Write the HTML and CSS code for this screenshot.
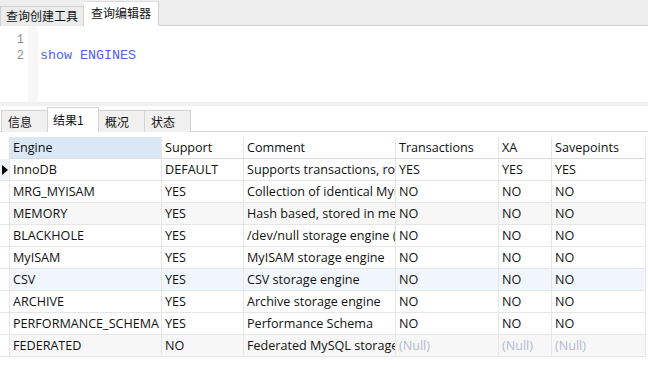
FILE: index.html
```html
<!DOCTYPE html>
<html>
<head>
<meta charset="utf-8">
<link rel="stylesheet" href="styles.css">
</head>
<body>
<div class="topbar">
  <div class="ttab">查询创建工具</div>
  <div class="ttab active">查询编辑器</div>
</div>
<div class="editor">
  <div class="gutter">
    <div class="ln">1</div>
    <div class="ln">2</div>
  </div>
  <div class="code">
    <div class="cl"></div>
    <div class="cl kw">show ENGINES</div>
  </div>
</div>
<div class="band"></div>
<div class="rtabs">
  <div class="rtab">信息</div>
  <div class="rtab active">结果1</div>
  <div class="rtab">概况</div>
  <div class="rtab">状态</div>
</div>
<div class="grid">
  <div class="row head">
    <div class="ind"></div>
    <div class="c sel">Engine</div>
    <div class="c">Support</div>
    <div class="c">Comment</div>
    <div class="c">Transactions</div>
    <div class="c">XA</div>
    <div class="c">Savepoints</div>
  </div>
  <div class="row">
    <div class="ind cur"><span class="tri"></span></div>
    <div class="c">InnoDB</div><div class="c">DEFAULT</div><div class="c"><span class="t">Supports transactions, row-level locking, and foreign keys</span></div><div class="c">YES</div><div class="c">YES</div><div class="c">YES</div>
  </div>
  <div class="row">
    <div class="ind"></div>
    <div class="c">MRG_MYISAM</div><div class="c">YES</div><div class="c"><span class="t">Collection of identical MyISAM tables</span></div><div class="c">NO</div><div class="c">NO</div><div class="c">NO</div>
  </div>
  <div class="row alt">
    <div class="ind"></div>
    <div class="c">MEMORY</div><div class="c">YES</div><div class="c"><span class="t">Hash based, stored in memory, useful for temporary tables</span></div><div class="c">NO</div><div class="c">NO</div><div class="c">NO</div>
  </div>
  <div class="row">
    <div class="ind"></div>
    <div class="c">BLACKHOLE</div><div class="c">YES</div><div class="c"><span class="t">/dev/null storage engine (anything you write to it disappears)</span></div><div class="c">NO</div><div class="c">NO</div><div class="c">NO</div>
  </div>
  <div class="row">
    <div class="ind"></div>
    <div class="c">MyISAM</div><div class="c">YES</div><div class="c">MyISAM storage engine</div><div class="c">NO</div><div class="c">NO</div><div class="c">NO</div>
  </div>
  <div class="row hov">
    <div class="ind"></div>
    <div class="c">CSV</div><div class="c">YES</div><div class="c">CSV storage engine</div><div class="c">NO</div><div class="c">NO</div><div class="c">NO</div>
  </div>
  <div class="row">
    <div class="ind"></div>
    <div class="c">ARCHIVE</div><div class="c">YES</div><div class="c">Archive storage engine</div><div class="c">NO</div><div class="c">NO</div><div class="c">NO</div>
  </div>
  <div class="row">
    <div class="ind"></div>
    <div class="c">PERFORMANCE_SCHEMA</div><div class="c">YES</div><div class="c">Performance Schema</div><div class="c">NO</div><div class="c">NO</div><div class="c">NO</div>
  </div>
  <div class="row alt">
    <div class="ind"></div>
    <div class="c">FEDERATED</div><div class="c">NO</div><div class="c"><span class="t">Federated MySQL storage engine</span></div><div class="c null">(Null)</div><div class="c null">(Null)</div><div class="c null">(Null)</div>
  </div>
</div>
</body>
</html>
```
FILE: styles.css
```css
* { box-sizing: border-box; }
html, body {
  margin: 0;
  padding: 0;
  background: #ffffff;
  width: 648px;
  height: 392px;
  overflow: hidden;
  font-family: "Open Sans", "Noto Sans CJK SC", sans-serif;
  font-size: 12.6px;
  color: #111;
}

.topbar {
  height: 26px;
  background: #eeeeee;
  border-bottom: 1px solid #d2d2d2;
  display: flex;
  align-items: flex-end;
}
.ttab {
  font-family: "Noto Sans CJK SC", sans-serif;
  font-size: 12px;
  height: 20px;
  line-height: 18px;
  padding: 0;
  width: 84px;
  background: #ececec;
  border: 1px solid #d2d2d2;
  border-bottom: none;
  margin-bottom: -1px;
  text-align: center;
  white-space: nowrap;
  color: #111;
}
.ttab.active {
  width: 75px;
  height: 25px;
  line-height: 21px;
  background: #ffffff;
  border-left: none;
  border-top: 1px solid #dedede;
  border-right: 1px solid #d2d2d2;
}

.editor {
  height: 76px;
  display: flex;
  padding-top: 6px;
}
.gutter {
  width: 38px;
  margin-top: -6px;
  padding-top: 6px;
  background:
    repeating-conic-gradient(#f2f2f2 0 25%, #ffffff 0 50%) 28px 0 / 2px 2px;
  background-clip: content-box;
}
.gutter {
  background: linear-gradient(to right, #ffffff 0 28px, #f7f7f7 28px 38px);
}
.ln {
  height: 16px;
  line-height: 16px;
  width: 24px;
  text-align: right;
  font-family: "Liberation Mono", monospace;
  font-size: 12px;
  color: #909090;
}
.code {
  padding-left: 2px;
}
.cl {
  height: 16px;
  line-height: 16px;
  font-family: "Liberation Mono", monospace;
  font-size: 13.33px;
}
.kw { color: #4c63f2; }

.band {
  height: 4px;
  background: #f0f0f0;
}

.rtabs {
  height: 26px;
  display: flex;
  align-items: flex-end;
  padding-left: 1px;
  border-bottom: 1px solid #d4d4d4;
}
.rtab {
  font-family: "Noto Sans CJK SC", sans-serif;
  font-size: 12px;
  width: 47px;
  height: 22px;
  line-height: 22px;
  padding-left: 6px;
  background: #f0f0f0;
  border: 1px solid #d4d4d4;
  border-bottom: none;
  margin-bottom: -1px;
  margin-right: -1px;
  color: #111;
}
.rtab.active {
  width: 52px;
  height: 25px;
  line-height: 23px;
  background: #ffffff;
  padding-left: 5px;
}

.grid {
  margin-top: 5px;
  width: 646px;
}
.row {
  display: grid;
  grid-template-columns: 10px 152px 82px 152px 103px 53px 94px;
  height: 22px;
}
.row > div {
  border-bottom: 1px solid #e6e6e6;
  border-right: 1px solid #e6e6e6;
  overflow: hidden;
  white-space: nowrap;
  line-height: 21px;
}
.t {
  display: inline-block;
  max-width: 100%;
  overflow: hidden;
  vertical-align: top;
}
.c { padding-left: 3px; }
.head .c.sel { background: #dae8f5; }
.head > div { border-bottom-color: #dcdcdc; }
.head .ind { border-bottom: none; }
.ind { position: relative; }
.ind.cur { background: #eef3fa; }
.tri {
  position: absolute;
  left: 2px;
  top: 6px;
  width: 0;
  height: 0;
  border-top: 5px solid transparent;
  border-bottom: 5px solid transparent;
  border-left: 6px solid #000;
}
.row.alt > div { background: #f7f7f7; }
.row.hov > div { background: #f1f6fc; }
.row.alt > .ind, .row.hov > .ind { background: #ffffff; }
.null { color: #b2bad3; }
```
